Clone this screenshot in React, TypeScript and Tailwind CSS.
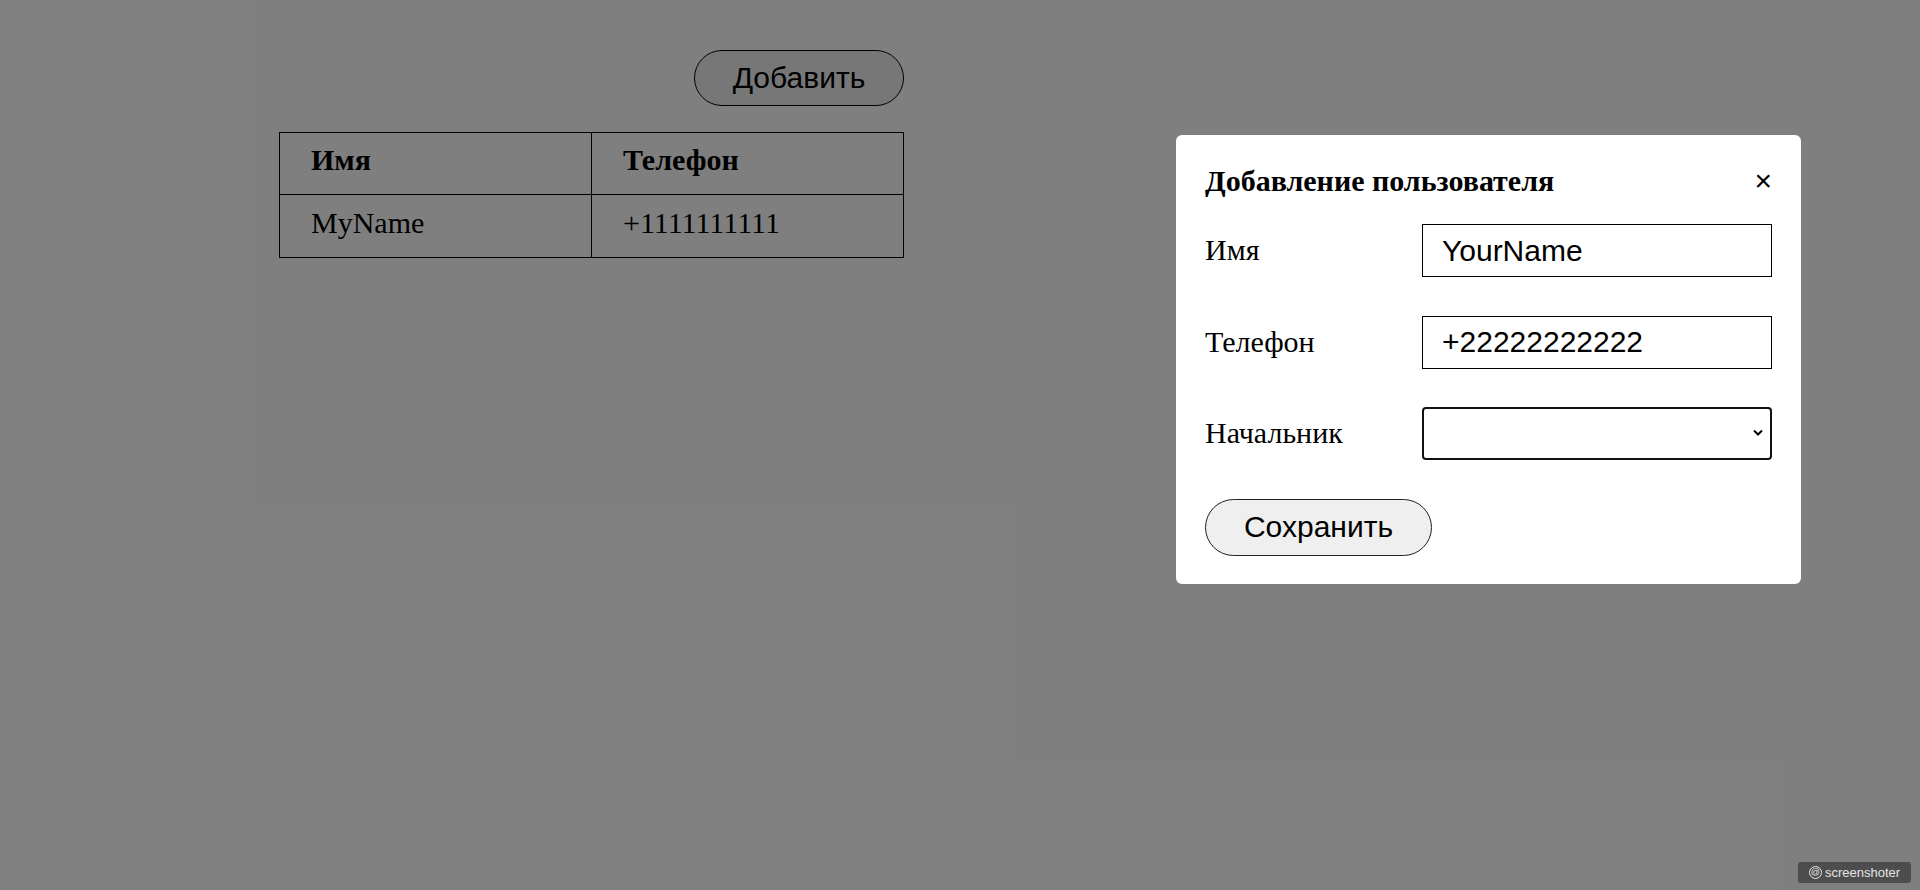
import { useState } from "react";

type User = { name: string; phone: string };

const users: User[] = [{ name: "MyName", phone: "+1111111111" }];

function UsersTable() {
  return (
    <table className="w-[625px] table-fixed border-collapse border border-black text-left">
      <thead>
        <tr>
          <th className="border border-black pt-[10px] pb-[16px] pl-[31px] font-bold">Имя</th>
          <th className="border border-black pt-[10px] pb-[16px] pl-[31px] font-bold">Телефон</th>
        </tr>
      </thead>
      <tbody>
        {users.map((u) => (
          <tr key={u.phone}>
            <td className="border border-black pt-[11px] pb-[17px] pl-[31px]">{u.name}</td>
            <td className="border border-black pt-[11px] pb-[17px] pl-[31px]">{u.phone}</td>
          </tr>
        ))}
      </tbody>
    </table>
  );
}

function AddUserModal() {
  const [name, setName] = useState("YourName");
  const [phone, setPhone] = useState("+22222222222");

  return (
    <div className="absolute left-[1176px] top-[135px] w-[625px] rounded-[6px] bg-white px-[29px] pt-[28px] pb-[28.5px]">
      {/* Header */}
      <div className="flex h-[35px] items-center justify-between">
        <h2 className="text-[30px] font-bold leading-none">Добавление пользователя</h2>
        <button className="font-['Liberation_Sans',Arial,sans-serif] text-[30px] leading-none text-black">
          ×
        </button>
      </div>

      <div className="mt-[26px] flex flex-col gap-[38.5px]">
        <div className="flex h-[53px] items-center justify-between">
          <label>Имя</label>
          <input
            value={name}
            onChange={(e) => setName(e.target.value)}
            className="h-[53px] w-[350px] border border-black pl-[19px] font-['Liberation_Sans',Arial,sans-serif] text-[30px] text-black outline-none"
          />
        </div>
        <div className="flex h-[53px] items-center justify-between">
          <label>Телефон</label>
          <input
            value={phone}
            onChange={(e) => setPhone(e.target.value)}
            className="h-[53px] w-[350px] border border-black pl-[19px] font-['Liberation_Sans',Arial,sans-serif] text-[30px] text-black outline-none"
          />
        </div>
        <div className="flex h-[53px] items-center justify-between">
          <label>Начальник</label>
          <div className="relative h-[53px] w-[350px]">
            <select className="h-full w-full appearance-none rounded-[4px] border-2 border-[#111] bg-white font-['Liberation_Sans',Arial,sans-serif] text-[30px] outline-none">
              <option value=""></option>
            </select>
            <svg
              className="pointer-events-none absolute right-[8px] top-[21px]"
              width="12"
              height="9"
              viewBox="0 0 12 9"
              fill="none"
            >
              <path d="M2 2.5 L6 6.5 L10 2.5" stroke="#000" strokeWidth="2" />
            </svg>
          </div>
        </div>
        <div>
          <button className="h-[57px] w-[227px] rounded-full border border-[#222] bg-[#efefef] font-['Liberation_Sans',Arial,sans-serif] text-[30px] text-black">
            Сохранить
          </button>
        </div>
      </div>
    </div>
  );
}

export default function App() {
  return (
    <div className="relative h-[890px] w-full overflow-hidden bg-white font-['Liberation_Serif','Times_New_Roman',serif] text-[30px] leading-[1.15] text-black">
      <main className="flex w-[625px] flex-col items-end gap-[26px] pt-[50px] ml-[279px]">
        <button className="h-[56px] w-[210px] rounded-full border border-black bg-[#efefef] font-['Liberation_Sans',Arial,sans-serif] text-[30px] text-black">
          Добавить
        </button>
        <UsersTable />
      </main>

      {/* Overlay */}
      <div className="absolute inset-0 bg-black/50">
        <AddUserModal />
      </div>

      {/* Screenshot badge */}
      <div className="absolute bottom-[7px] right-[9px] flex h-[21px] w-[113px] items-center justify-center gap-[3px] rounded-[3px] bg-[#4d4d4d] font-['Liberation_Sans',Arial,sans-serif] text-[13px] text-[#e6e6e6]">
        <span className="flex h-[13px] w-[13px] items-center justify-center rounded-full border-[1.5px] border-[#e6e6e6] text-[9px] leading-none">
          @
        </span>
        <span className="leading-none">screenshoter</span>
      </div>
    </div>
  );
}
